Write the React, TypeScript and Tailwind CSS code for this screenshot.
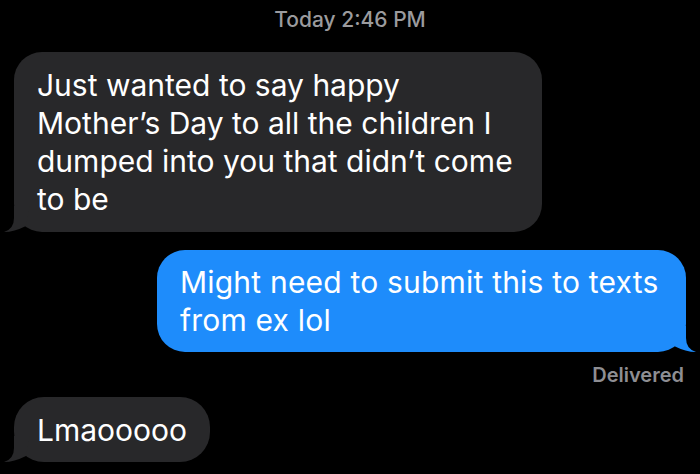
import React from "react";

function LeftTail({ color }: { color: string }) {
  return (
    <svg
      className="absolute bottom-0 left-[-10px]"
      width="30"
      height="26"
      viewBox="0 0 30 26"
    >
      <path d="M10 0 L10 12 Q10 23 0 26 Q10 26 22 20 L26 0 Z" fill={color} />
    </svg>
  );
}

function RightTail({ color }: { color: string }) {
  return (
    <svg
      className="absolute bottom-0 right-[-10px]"
      width="30"
      height="26"
      viewBox="0 0 30 26"
    >
      <path d="M20 0 L20 12 Q20 23 30 26 Q20 26 8 20 L4 0 Z" fill={color} />
    </svg>
  );
}

export default function App() {
  return (
    <div
      className="w-[700px] h-[474px] bg-black overflow-hidden flex flex-col text-white"
      style={{ fontFamily: "Inter, 'Liberation Sans', sans-serif" }}
    >
      <div className="pt-2 text-center text-[21px] leading-6 font-medium text-[#9b9b9e]">
        Today 2:46 PM
      </div>

      <div className="mt-5 pl-[14px] flex">
        <div className="relative w-[528px] rounded-[28px] bg-[#28282a] pl-[23px] pt-[14px] pb-[14px] text-[30px] leading-[38px] whitespace-nowrap">
          Just wanted to say happy
          <br />
          Mother’s Day to all the children I
          <br />
          dumped into you that didn’t come
          <br />
          to be
          <LeftTail color="#28282a" />
        </div>
      </div>

      <div className="mt-[18px] pr-[14px] flex justify-end">
        <div className="relative w-[529px] rounded-[28px] bg-[#1e8cfb] pl-[23px] py-[13px] text-[30px] leading-[38px] whitespace-nowrap tracking-[0.2px]">
          Might need to submit this to texts
          <br />
          from ex lol
          <RightTail color="#1e8cfb" />
        </div>
      </div>

      <div className="mt-3 pr-[16px] text-right text-[20px] leading-[22px] font-semibold text-[#8e8e93]">
        Delivered
      </div>

      <div className="mt-[11px] pl-[14px] flex">
        <div className="relative rounded-[30px] bg-[#28282a] px-[23px] pt-[14px] pb-[13px] text-[30px] leading-[38px] whitespace-nowrap">
          Lmaooooo
          <LeftTail color="#28282a" />
        </div>
      </div>
    </div>
  );
}
